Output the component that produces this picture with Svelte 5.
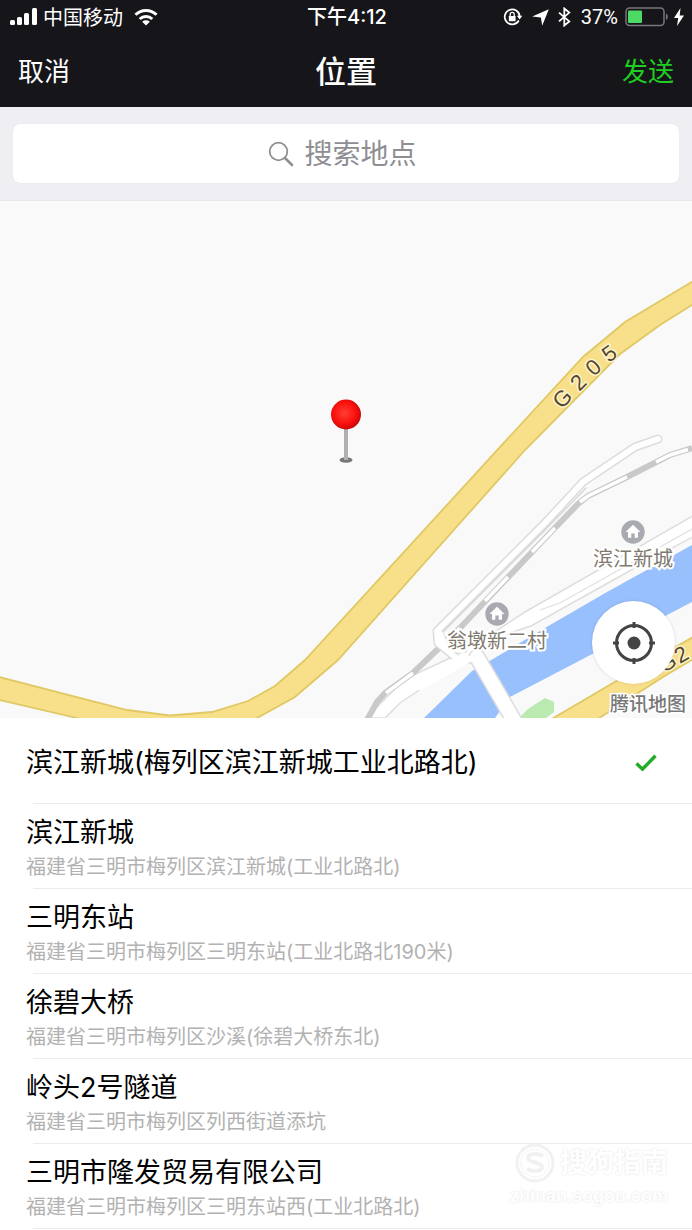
<script>
  const places = [
    { name: '滨江新城(梅列区滨江新城工业北路北)', address: '' },
    { name: '滨江新城', address: '福建省三明市梅列区滨江新城(工业北路北)' },
    { name: '三明东站', address: '福建省三明市梅列区三明东站(工业北路北190米)' },
    { name: '徐碧大桥', address: '福建省三明市梅列区沙溪(徐碧大桥东北)' },
    { name: '岭头2号隧道', address: '福建省三明市梅列区列西街道添坑' },
    { name: '三明市隆发贸易有限公司', address: '福建省三明市梅列区三明东站西(工业北路北)' }
  ];

  const roadLabels = [
    { char: 'G', x: 562, y: 398, turn: -47 },
    { char: '2', x: 578, y: 382, turn: -45 },
    { char: '0', x: 593, y: 367, turn: -42 },
    { char: '5', x: 609, y: 353, turn: -36 },
    { char: 'G', x: 667, y: 662, turn: -30 },
    { char: '2', x: 681, y: 654, turn: -30 }
  ];

  const homes = [
    { x: 633, y: 532, name: '滨江新城' },
    { x: 497, y: 614, name: '翁墩新二村' }
  ];

  let selected = $state(0);
  let query = $state('');
</script>

<main class="screen">
  <header class="top">
    <div class="status">
      <div class="group">
        <svg width="28" height="18" viewBox="0 0 28 18" fill="#fff" aria-hidden="true">
          <rect x="0" y="12" width="5" height="5" rx="1.5" />
          <rect x="7" y="9" width="5" height="8" rx="1.5" />
          <rect x="14" y="5" width="5" height="12" rx="1.5" />
          <rect x="22" y="0" width="5" height="17" rx="1.5" />
        </svg>
        <span class="carrier">中国移动</span>
        <svg class="wifi" width="24" height="18" viewBox="0 0 24 18" fill="none" stroke="#fff" stroke-width="3" aria-hidden="true">
          <path d="M1.5 6.8a15 15 0 0 1 21 0" />
          <path d="M5.7 11a9 9 0 0 1 12.6 0" />
          <path d="M12 17.5l-3.8-3.8a5.6 5.6 0 0 1 7.6 0z" fill="#fff" stroke="none" />
        </svg>
      </div>
      <span class="time">下午4:12</span>
      <div class="group end">
        <svg width="20" height="18" viewBox="0 0 20 18" fill="none" stroke="#fff" stroke-width="1.7" aria-hidden="true">
          <path d="M15.8 12.5a7.5 7.5 0 1 1 .9-4" />
          <path d="M13.8 7.7h5.6l-2.8 3.8z" fill="#fff" stroke="none" />
          <rect x="5.8" y="8" width="6.8" height="5.2" rx="0.6" fill="#fff" stroke="none" />
          <path d="M7.2 8.3V6.4a2 2 0 0 1 4 0v1.9" stroke-width="1.3" />
        </svg>
        <svg class="arrow" width="17" height="17" viewBox="0 0 17 17" fill="#fff" aria-hidden="true">
          <path d="M16.8.2L10.2 16.8 8.9 8.5.2 7.5z" />
        </svg>
        <svg width="13" height="20" viewBox="0 0 13 20" fill="none" stroke="#fff" stroke-width="1.8" aria-hidden="true">
          <path d="M1 5.6l10.3 8.8L6.3 18.5V1.5l5 4.1L1 14.4" />
        </svg>
        <span class="percent">37%</span>
        <svg width="44" height="20" viewBox="0 0 44 20" aria-hidden="true">
          <rect x="1" y="1" width="38" height="17.5" rx="3.5" fill="none" stroke="#77777b" stroke-width="1.5" />
          <rect x="3" y="3.5" width="14" height="12.5" rx="1" fill="#4cd964" />
          <path d="M41 6.5c2.4 1 2.4 5.5 0 6.5z" fill="#77777b" />
        </svg>
        <svg width="10" height="18" viewBox="0 0 10 18" fill="#fff" aria-hidden="true">
          <path d="M6.5 0L0 10h4.2L3 18l7-10.5H5.7z" />
        </svg>
      </div>
    </div>
    <nav class="bar">
      <button class="cancel" type="button">取消</button>
      <h1>位置</h1>
      <button class="send" type="button">发送</button>
    </nav>
  </header>

  <div class="search">
    <label class="field">
      <svg width="26" height="26" viewBox="0 0 26 26" fill="none" stroke="#8e8e93" aria-hidden="true">
        <circle cx="10.5" cy="10.5" r="8.8" stroke-width="1.8" />
        <path d="M17 17l7 7" stroke-width="2.6" stroke-linecap="round" />
      </svg>
      <input type="text" placeholder="搜索地点" aria-label="搜索地点" bind:value={query} />
    </label>
  </div>

  <section class="map" aria-label="腾讯地图">
    <svg class="tiles" viewBox="0 201 692 517">
      <defs>
        <radialGradient id="pin" cx="45%" cy="45%" r="55%">
          <stop offset="0" stop-color="#ff3d35" />
          <stop offset="0.7" stop-color="#f80f0c" />
          <stop offset="1" stop-color="#c90808" />
        </radialGradient>
      </defs>
      <rect y="201" width="692" height="517" fill="#f9f9f9" />

      <!-- river and park -->
      <path d="M692 545L607 592 550 625 493 659 472 671 424 718H495L510 697 692 602z" fill="#98c0fd" />
      <path d="M519 718L528 709 545 698 554 702V712L546 718z" fill="#bbeab0" />

      <!-- riverside road -->
      <path d="M698 513L525 612 493 633 450 658 405 679 366 718H385L400 703 467 658 513 632 531 626 633 569 698 534z" fill="#fff" stroke="#dedede" stroke-width="1.5" />
      <path d="M692 529L560 603 540 610" fill="none" stroke="#e0e0e0" stroke-width="1.2" />

      <!-- railway -->
      <path d="M692 448L670 455 627 477 588 496 578 504 550 533 460 628 437 650 413 673 385 693 377 702 367 720" fill="none" stroke="#c9c9c9" stroke-width="6" />
      <g fill="none" stroke="#fff" stroke-width="3.5">
        <path d="M688 449.5L670 455 656 462" />
        <path d="M627 477L588 496 580 502" />
        <path d="M555 528L532 552" />
        <path d="M508 577L485 601" />
        <path d="M460 628L446 641" />
        <path d="M413 673L386 693" />
      </g>

      <!-- local lanes and bridge -->
      <g fill="none" stroke-linejoin="round" stroke-linecap="round">
        <path d="M658 439L635 447 583 482 545 523 437 631 438 643 460 661 480 657" stroke="#dcdcdc" stroke-width="9" />
        <path d="M440 634L446 648 463 650" stroke="#e0e0e0" stroke-width="8" />
        <path d="M440 634L446 648 463 650" stroke="#fff" stroke-width="6" />
        <path d="M477 657L516 724" stroke="#dcdcdc" stroke-width="17" />
        <path d="M658 439L635 447 583 482 545 523 437 631 438 643 460 661 480 657" stroke="#fff" stroke-width="6" />
        <path d="M477 657L516 724" stroke="#fff" stroke-width="14" />
        <path d="M420 684L464 659" stroke="#fff" stroke-width="12" />
        <path d="M586 488L546 529 444 631" stroke="#d8d8d8" stroke-width="1.5" />
      </g>

      <!-- national highway -->
      <g fill="#f8df8a" stroke="#e0c864" stroke-width="1.8">
        <path d="M700 277L625 322 583 357 512 434 305 660 275 686 248 701 212 712 170 715.5 127 710 -5 676V699L77 718 120 730H230L257 718 295 697 338 660 525 450 620 354 660 325 700 300z" />
        <path d="M550 720L613 683 700 633V655L663 677 593 722z" />
      </g>

      <g class="road-label">
        {#each roadLabels as label}
          <text transform="translate({label.x} {label.y}) rotate({label.turn})" y="8">{label.char}</text>
        {/each}
      </g>

      {#each homes as home}
        <g transform="translate({home.x} {home.y})">
          <circle r="11.7" fill="#a9a9b1" />
          <path d="M0 -7.2L-7.5 0H-5V5.8H-1.7V1.5H1.7V5.8H5V0H7.5z" fill="#fff" />
          <text class="place-label" y="34">{home.name}</text>
        </g>
      {/each}

      <text class="brand" x="648" y="711">腾讯地图</text>

      <!-- pin -->
      <ellipse cx="346" cy="460" rx="6.5" ry="2.8" fill="#777" />
      <rect x="344" y="427" width="4" height="33" fill="#b0b0b0" />
      <circle cx="346" cy="414.5" r="15" fill="url(#pin)" />
    </svg>

    <button class="locate" type="button" aria-label="定位">
      <svg width="42" height="42" viewBox="0 0 42 42" fill="none" stroke="#444" stroke-width="3" aria-hidden="true">
        <circle cx="21" cy="21" r="17.5" />
        <circle cx="21" cy="21" r="6.5" fill="#444" stroke="none" />
        <path d="M21 0v6M21 36v6M0 21h6M36 21h6" />
      </svg>
    </button>
  </section>

  <section class="results">
    <ul>
      {#each places as place, i}
        <li>
          <button class="place" type="button" aria-pressed={selected === i} onclick={() => (selected = i)}>
            <span class="text">
              <span class="name">{place.name}</span>
              {#if place.address}<span class="address">{place.address}</span>{/if}
            </span>
            {#if selected === i}
              <svg width="22" height="18" viewBox="0 0 22 18" fill="none" stroke="#22ac26" stroke-width="3.4" aria-hidden="true">
                <path d="M1.5 9.5L7.5 15.2 20.5 1.8" />
              </svg>
            {/if}
          </button>
        </li>
      {/each}
    </ul>
    <div class="watermark">
      <div class="logo">
        <svg width="40" height="40" viewBox="0 0 40 40" fill="none" aria-hidden="true">
          <circle cx="20" cy="20" r="18" stroke="#f1f1f1" stroke-width="3" />
          <circle cx="20" cy="20" r="14" stroke="#f5f5f5" stroke-width="1" />
          <path d="M28 13c-5-3-15-3-15 2 0 5 14 4 14 9 0 5-10 5-15 2" stroke="#f1f1f1" stroke-width="4" />
        </svg>
        <span>搜狗指南</span>
      </div>
      <span class="site">zhinan.sogou.com</span>
    </div>
  </section>
</main>

<style>
  :global(body) {
    margin: 0;
    background: #fff;
  }
  .screen {
    min-height: 100vh;
    background: #fff;
    color: #000;
    font-family: 'Noto Sans CJK SC', sans-serif;
    overflow: hidden;
  }
  button,
  input {
    font: inherit;
    border: 0;
    padding: 0;
    background: none;
    color: inherit;
  }
  button {
    cursor: pointer;
  }
  svg {
    display: block;
    flex: none;
  }
  .top {
    background: #16151a;
    color: #fff;
  }
  .status {
    display: grid;
    grid-template-columns: 1fr auto 1fr;
    align-items: center;
    height: 34px;
    padding: 0 8px 0 10px;
    font-size: 20px;
    line-height: 24px;
  }
  .group {
    display: flex;
    align-items: center;
    gap: 5px;
  }
  .wifi {
    margin-left: 6px;
  }
  .arrow {
    margin: 0 4px;
  }
  .end {
    justify-content: flex-end;
  }
  .time {
    font-family: Inter, 'Noto Sans CJK SC', sans-serif;
    font-weight: 500;
  }
  .percent {
    padding: 0 2px 0 5px;
    font-family: Roboto, sans-serif;
  }
  .bar {
    display: grid;
    grid-template-columns: 1fr auto 1fr;
    align-items: center;
    height: 70px;
    padding: 0 18px 3px;
    font-size: 26px;
  }
  .cancel {
    justify-self: start;
  }
  .send {
    justify-self: end;
    color: #1fce21;
  }
  h1 {
    margin: 0;
    font-size: 31px;
    font-weight: 500;
  }
  .search {
    padding: 17px 13px;
    background: #eeeef3;
    border-bottom: 1px solid #e8e8ec;
  }
  .field {
    display: flex;
    align-items: center;
    justify-content: center;
    gap: 11px;
    height: 59px;
    border-radius: 7px;
    background: #fff;
    box-shadow: 0 0 1px #d0d0d8;
    font-size: 28px;
  }
  .field input {
    width: 4em;
    padding: 0 8px 3px 0;
    outline: 0;
  }
  .field input:focus {
    width: 60%;
  }
  .field input::placeholder {
    color: #8e8e93;
    opacity: 1;
  }
  .map {
    position: relative;
  }
  .tiles {
    width: 100%;
    height: auto;
  }
  .road-label {
    font-family: 'Liberation Sans', sans-serif;
    font-size: 22px;
    text-anchor: middle;
    fill: #55482c;
    stroke: #fdf3cf;
    stroke-width: 3px;
    paint-order: stroke;
  }
  .place-label {
    font-size: 20px;
    text-anchor: middle;
    fill: #80796f;
    stroke: #fff;
    stroke-width: 4px;
    paint-order: stroke;
  }
  .brand {
    font-size: 19px;
    font-weight: 500;
    text-anchor: middle;
    fill: #777;
    stroke: #fff;
    stroke-width: 3px;
    paint-order: stroke;
  }
  .locate {
    position: absolute;
    right: 17px;
    bottom: 34px;
    display: grid;
    place-items: center;
    width: 83px;
    height: 83px;
    border-radius: 50%;
    background: #fff;
    box-shadow: 0 0 3px rgba(0, 0, 0, 0.15);
  }
  .results {
    position: relative;
    font-family: Inter, 'Noto Sans CJK SC', sans-serif;
  }
  ul {
    margin: 0;
    padding: 1px 0 0;
    list-style: none;
  }
  li::after {
    content: '';
    display: block;
    height: 1px;
    margin-left: 33px;
    background: #ebebeb;
  }
  .place {
    display: flex;
    align-items: center;
    justify-content: space-between;
    width: 100%;
    min-height: 84px;
    padding: 10px 35px 7px 26px;
    text-align: left;
  }
  .text {
    display: flex;
    flex-direction: column;
    gap: 2px;
  }
  .name {
    font-size: 27px;
    line-height: 37px;
  }
  .address {
    font-size: 20px;
    line-height: 28px;
    color: #b2b2b2;
  }
  .watermark {
    position: absolute;
    right: 24px;
    bottom: 20px;
    display: flex;
    flex-direction: column;
    align-items: flex-end;
    color: #fff;
    font-weight: 700;
    text-shadow: 0 0 2px #ddd;
    pointer-events: none;
  }
  .logo {
    display: flex;
    align-items: center;
    gap: 5px;
    font-size: 27px;
    line-height: 40px;
  }
  .site {
    font-family: 'Liberation Sans', sans-serif;
    font-size: 18px;
    line-height: 26px;
  }
</style>
